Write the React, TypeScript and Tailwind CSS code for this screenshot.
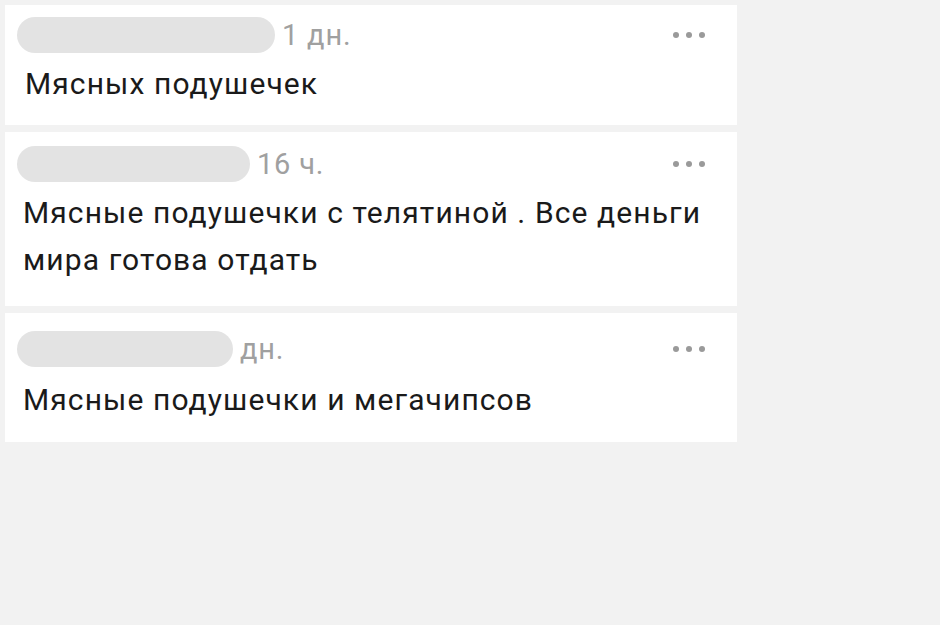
const comments = [
  { id: 1, pill: 'w-[258px]', time: '1 дн.', box: 'pt-3 pb-[18px]', gap: 'mt-[7px]', text: 'Мясных подушечек', indent: 'pl-5' },
  { id: 2, pill: 'w-[233px]', time: '16 ч.', box: 'pt-[14px] pb-[23px]', gap: 'mt-[7px]', text: 'Мясные подушечки с телятиной . Все деньги мира готова отдать', indent: 'pl-[18px]' },
  { id: 3, pill: 'w-[216px]', time: 'дн.', box: 'pt-[18px] pb-[19px]', gap: 'mt-[9px]', text: 'Мясные подушечки и мегачипсов', indent: 'pl-[18px]' },
];

function MoreDots() {
  return (
    <div className="flex items-center gap-[7px] mr-[32px]">
      <span className="w-[6px] h-[6px] rounded-full bg-[#9a9a9a]" />
      <span className="w-[6px] h-[6px] rounded-full bg-[#9a9a9a]" />
      <span className="w-[6px] h-[6px] rounded-full bg-[#9a9a9a]" />
    </div>
  );
}

export default function App() {
  return (
    <div
      className="w-[940px] h-[625px] bg-[#f2f2f2] p-[5px] flex flex-col gap-[7px]"
      style={{ fontFamily: 'Roboto, "Noto Sans", sans-serif' }}
    >
      {comments.map((c) => (
        <div key={c.id} className={`w-[732px] bg-white ${c.box}`}>
          {/* header: hidden author name, time, menu */}
          <div className="flex items-center h-9 pl-3">
            <div className={`${c.pill} h-9 rounded-full bg-[#e3e3e3]`} />
            <span className="ml-[7px] text-[29px] tracking-[0.8px] leading-none text-[#a0a0a0]">{c.time}</span>
            <div className="ml-auto">
              <MoreDots />
            </div>
          </div>
          <p className={`${c.gap} ${c.indent} pr-8 text-[30px] tracking-[1.1px] leading-[47px] text-[#1a1a1a]`}>{c.text}</p>
        </div>
      ))}
    </div>
  );
}
